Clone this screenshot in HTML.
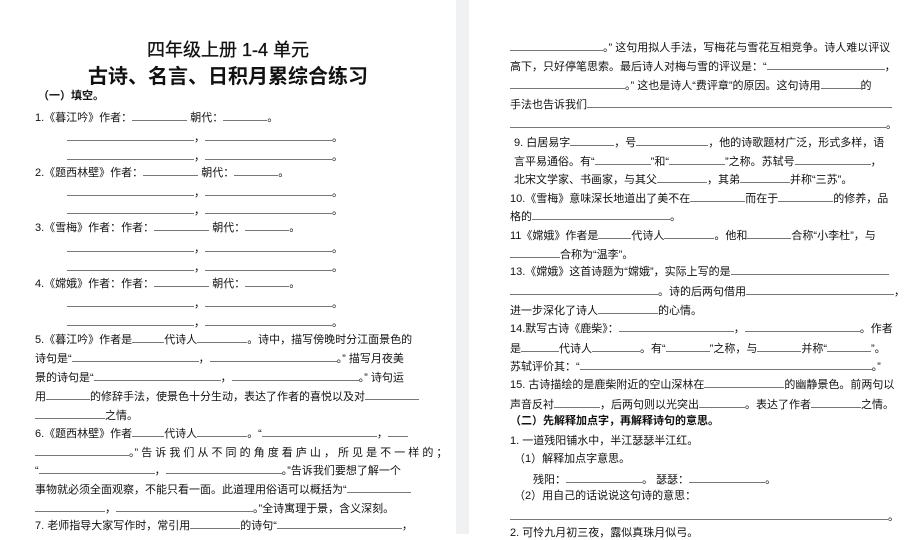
<!DOCTYPE html>
<html><head><meta charset="utf-8"><style>
body{margin:0;width:917px;height:534px;overflow:hidden;background:#fff;font-family:"Liberation Sans","Noto Sans CJK SC",sans-serif;color:#111;position:relative}
.gap{position:absolute;left:456px;top:0;width:13px;height:534px;background:#f0f1f3}
.l{position:absolute;white-space:nowrap;font-size:11px;line-height:14px}
.u{display:inline-block;border-bottom:1px solid #777;height:11px;vertical-align:baseline}
.b{font-weight:bold}
.t{position:absolute;left:0;width:456px;text-align:center;white-space:nowrap}
</style></head><body>
<div class="gap"></div>
<div class="t" style="top:36px;font-size:18px;-webkit-text-stroke:0.3px #111">四年级上册 1-4 单元</div>
<div class="t" style="top:60px;font-size:20px;font-weight:bold">古诗、名言、日积月累综合练习</div>
<div class="l b" style="left:38px;top:89px">（一）填空。</div>
<div class="l" style="left:35px;top:109px">1.《暮江吟》作者：<span class="u" style="width:55px"></span> 朝代：<span class="u" style="width:44px"></span>。</div>
<div class="l" style="left:67px;top:129px"><span class="u" style="width:127px"></span>，<span class="u" style="width:127px"></span>。</div>
<div class="l" style="left:67px;top:148px"><span class="u" style="width:127px"></span>，<span class="u" style="width:127px"></span>。</div>
<div class="l" style="left:35px;top:164px">2.《题西林壁》作者：<span class="u" style="width:55px"></span> 朝代：<span class="u" style="width:44px"></span>。</div>
<div class="l" style="left:67px;top:184px"><span class="u" style="width:127px"></span>，<span class="u" style="width:127px"></span>。</div>
<div class="l" style="left:67px;top:202px"><span class="u" style="width:127px"></span>，<span class="u" style="width:127px"></span>。</div>
<div class="l" style="left:35px;top:219px">3.《雪梅》作者：作者：<span class="u" style="width:55px"></span> 朝代：<span class="u" style="width:44px"></span>。</div>
<div class="l" style="left:67px;top:240px"><span class="u" style="width:127px"></span>，<span class="u" style="width:127px"></span>。</div>
<div class="l" style="left:67px;top:259px"><span class="u" style="width:127px"></span>，<span class="u" style="width:127px"></span>。</div>
<div class="l" style="left:35px;top:275px">4.《嫦娥》作者：作者：<span class="u" style="width:55px"></span> 朝代：<span class="u" style="width:44px"></span>。</div>
<div class="l" style="left:67px;top:295px"><span class="u" style="width:127px"></span>，<span class="u" style="width:127px"></span>。</div>
<div class="l" style="left:67px;top:314px"><span class="u" style="width:127px"></span>，<span class="u" style="width:127px"></span>。</div>
<div class="l" style="left:35px;top:331px">5.《暮江吟》作者是<span class="u" style="width:32px"></span>代诗人<span class="u" style="width:50px"></span>。诗中，描写傍晚时分江面景色的</div>
<div class="l" style="left:35px;top:350px">诗句是“<span class="u" style="width:127px"></span>，<span class="u" style="width:127px"></span>。” 描写月夜美</div>
<div class="l" style="left:35px;top:369px">景的诗句是“<span class="u" style="width:127px"></span>，<span class="u" style="width:127px"></span>。” 诗句运</div>
<div class="l" style="left:35px;top:388px">用<span class="u" style="width:44px"></span>的修辞手法，使景色十分生动，表达了作者的喜悦以及对<span class="u" style="width:54px"></span></div>
<div class="l" style="left:35px;top:407px"><span class="u" style="width:70px"></span>之情。</div>
<div class="l" style="left:35px;top:425px">6.《题西林壁》作者<span class="u" style="width:32px"></span>代诗人<span class="u" style="width:50px"></span>。“<span class="u" style="width:115px"></span>，<span class="u" style="width:20px"></span></div>
<div class="l" style="left:35px;top:444px"><span class="u" style="width:94px"></span>。” 告 诉 我 们 从 不 同 的 角 度 看 庐 山 ， 所 见 是 不 一 样 的 ；</div>
<div class="l" style="left:35px;top:462px"> “<span class="u" style="width:116px"></span>，<span class="u" style="width:116px"></span>。”告诉我们要想了解一个</div>
<div class="l" style="left:35px;top:481px">事物就必须全面观察，不能只看一面。此道理用俗语可以概括为“<span class="u" style="width:64px"></span></div>
<div class="l" style="left:35px;top:500px"><span class="u" style="width:70px"></span>，<span class="u" style="width:137px"></span>。”全诗寓理于景，含义深刻。</div>
<div class="l" style="left:35px;top:517px">7. 老师指导大家写作时，常引用<span class="u" style="width:50px"></span>的诗句“<span class="u" style="width:125px"></span>，</div>

<div class="l" style="left:510px;top:39px"><span class="u" style="width:93px"></span>。” 这句用拟人手法，写梅花与雪花互相竞争。诗人难以评议</div>
<div class="l" style="left:510px;top:58px">高下，只好停笔思索。最后诗人对梅与雪的评议是：“<span class="u" style="width:118px"></span>，</div>
<div class="l" style="left:510px;top:77px"><span class="u" style="width:115px"></span>。” 这也是诗人“费评章”的原因。这句诗用<span class="u" style="width:40px"></span>的</div>
<div class="l" style="left:510px;top:96px">手法也告诉我们<span class="u" style="width:305px"></span></div>
<div class="l" style="left:510px;top:116px"><span class="u" style="width:376px"></span>。</div>
<div class="l" style="left:514px;top:134px">9. 白居易字<span class="u" style="width:44px"></span>，号<span class="u" style="width:72px"></span>，他的诗歌题材广泛，形式多样，语</div>
<div class="l" style="left:514px;top:153px">言平易通俗。有“<span class="u" style="width:56px"></span>”和“<span class="u" style="width:56px"></span>”之称。苏轼号<span class="u" style="width:76px"></span>，</div>
<div class="l" style="left:514px;top:171px">北宋文学家、书画家，与其父<span class="u" style="width:50px"></span>，其弟<span class="u" style="width:50px"></span>并称“三苏”。</div>
<div class="l" style="left:510px;top:190px">10.《雪梅》意味深长地道出了美不在<span class="u" style="width:55px"></span>而在于<span class="u" style="width:55px"></span>的修养，品</div>
<div class="l" style="left:510px;top:208px">格的<span class="u" style="width:138px"></span>。</div>
<div class="l" style="left:510px;top:227px">11《嫦娥》作者是<span class="u" style="width:33px"></span>代诗人<span class="u" style="width:50px"></span>。他和<span class="u" style="width:44px"></span>合称“小李杜”，与</div>
<div class="l" style="left:510px;top:246px"><span class="u" style="width:50px"></span>合称为“温李”。</div>
<div class="l" style="left:510px;top:263px">13.《嫦娥》这首诗题为“嫦娥”，实际上写的是<span class="u" style="width:158px"></span></div>
<div class="l" style="left:510px;top:283px"><span class="u" style="width:148px"></span>。诗的后两句借用<span class="u" style="width:148px"></span>，</div>
<div class="l" style="left:510px;top:302px">进一步深化了诗人<span class="u" style="width:60px"></span>的心情。</div>
<div class="l" style="left:510px;top:320px">14.默写古诗《鹿柴》：<span class="u" style="width:115px"></span>，<span class="u" style="width:115px"></span>。作者</div>
<div class="l" style="left:510px;top:340px">是<span class="u" style="width:38px"></span>代诗人<span class="u" style="width:48px"></span>。有“<span class="u" style="width:44px"></span>”之称，与<span class="u" style="width:44px"></span>并称“<span class="u" style="width:44px"></span>”。</div>
<div class="l" style="left:510px;top:358px">苏轼评价其：“<span class="u" style="width:292px"></span>。”</div>
<div class="l" style="left:510px;top:376px">15. 古诗描绘的是鹿柴附近的空山深林在<span class="u" style="width:80px"></span>的幽静景色。前两句以</div>
<div class="l" style="left:510px;top:396px">声音反衬<span class="u" style="width:46px"></span>，后两句则以光突出<span class="u" style="width:46px"></span>。表达了作者<span class="u" style="width:50px"></span>之情。</div>
<div class="l b" style="left:510px;top:414px">（二）先解释加点字，再解释诗句的意思。</div>
<div class="l" style="left:510px;top:434px">1. 一道残阳铺水中，半江瑟瑟半江红。</div>
<div class="l" style="left:514px;top:452px">（1）解释加点字意思。</div>
<div class="l" style="left:533px;top:471px">残阳：<span class="u" style="width:76px"></span>。 瑟瑟：<span class="u" style="width:76px"></span>。</div>
<div class="l" style="left:514px;top:489px">（2）用自己的话说说这句诗的意思：</div>
<div class="l" style="left:510px;top:508px"><span class="u" style="width:378px"></span>。</div>
<div class="l" style="left:510px;top:526px">2. 可怜九月初三夜，露似真珠月似弓。</div>
</body></html>
